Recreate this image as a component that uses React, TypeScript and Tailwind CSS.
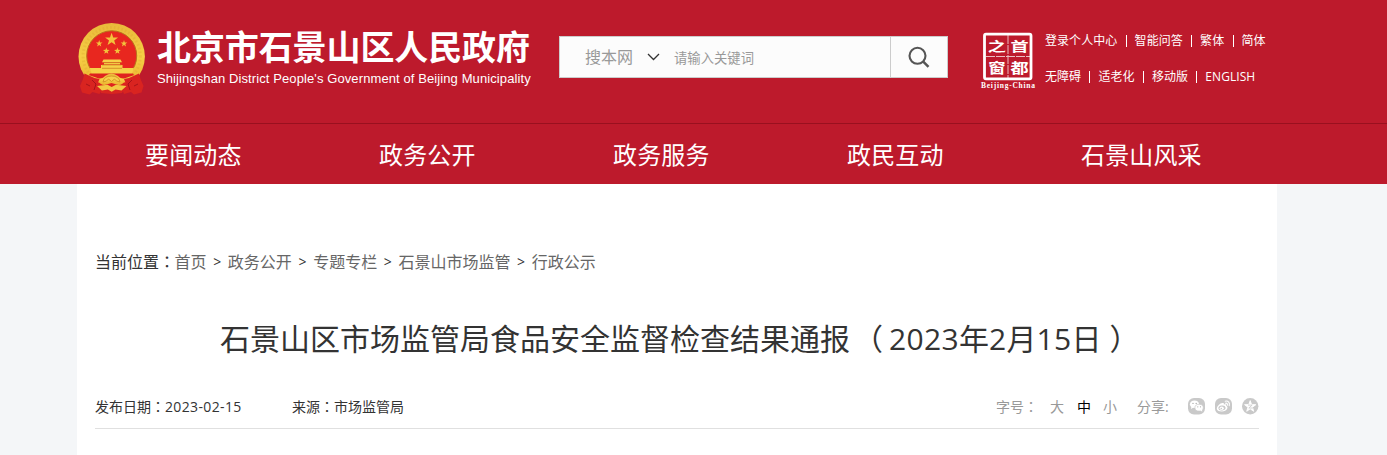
import React from "react";

const navItems = ["要闻动态", "政务公开", "政务服务", "政民互动", "石景山风采"];
const crumbs = ["首页", "政务公开", "专题专栏", "石景山市场监管", "行政公示"];

function star(cx: number, cy: number, r: number) {
  return Array.from({ length: 10 }, (_, i) => {
    const a = (Math.PI / 5) * i - Math.PI / 2;
    const q = i % 2 ? r * 0.4 : r;
    return `${(cx + q * Math.cos(a)).toFixed(2)},${(cy + q * Math.sin(a)).toFixed(2)}`;
  }).join(" ");
}

function Emblem() {
  return (
    <svg className="h-[72px] w-[68px] shrink-0" viewBox="0 0 68 72">
      <defs>
        <linearGradient id="gold" x1="0" y1="0" x2="0" y2="1">
          <stop offset="0" stopColor="#e9b93a" />
          <stop offset="0.5" stopColor="#f6cf45" />
          <stop offset="1" stopColor="#e8ae2c" />
        </linearGradient>
      </defs>
      <ellipse cx="33.7" cy="33.5" rx="33.2" ry="33.5" fill="url(#gold)" />
      <circle cx="33.7" cy="33" r="28.6" fill="none" stroke="#dca22b" strokeWidth="3" strokeDasharray="1.6 2.2" opacity="0.3" />
      <circle cx="33.7" cy="32.8" r="25" fill="#e8271f" stroke="#b9731c" strokeWidth="1" />
      <g fill="#f3c33c">
        <polygon points={star(33.6, 16.6, 6.8)} />
        <polygon points={star(21.2, 20.6, 3.5)} />
        <polygon points={star(46, 20.6, 3.5)} />
        <polygon points={star(28.3, 28, 3.5)} />
        <polygon points={star(39.4, 28, 3.5)} />
      </g>
      <path d="M25.5 36.5h17l1.5 2.8H24zM26 39.8h16v1.8H26zM23 42h21.5v3.5H23zM11.5 45h44.4l-2 6h-40z" fill="#f6d148" />
      <path d="M25 39.6h18M24 41.9h19.5M24 45.3h20" stroke="#cc741c" strokeWidth="0.7" />
      <path d="M12 50.5h43l5 8-12 8H19L7 58z" fill="#e0221e" />
      <path d="M9 51.5l9 3c3 1.5 6 1.5 9-1.5q6.5-5 13 0c3 3 6 3 9 1.5l9-3-2 6.5-10 1.5-4 3-8.5-2.5-8.5 2.5-4-3-10-1.5z" fill="url(#gold)" />
      <path d="M25 59q1-6 8.5-6t8.5 6l-3.5-1-2-2-3 2.5-3-2.5-2 2z" fill="#f6d04a" stroke="#cf881f" strokeWidth="0.8" />
      <path d="M6.5 50.5l10 4.5 5 1-2 5 4 5-2 5-7-2-3 2.5-7.5-2-2-6.5 3-7z" fill="#d92420" />
      <path d="M61 50.5l-10 4.5-5 1 2 5-4 5 2 5 7-2 3 2.5 7.5-2 2-6.5-3-7z" fill="#d92420" />
      <path d="M19 61l14.7 2L48.5 61 44 70l-10.3 1L23 70z" fill="#d92420" />
      <path d="M19 63l10.500-1.300 4.200 2.300 4.200-2.300L48.500 63l-5 4.500-6-1-3.800 2.200-3.800-2.200-6 1z" fill="#f2c943" />
      <path d="M14 57l4 4-2 6M8 61l4 2M54 57l-4 4 2 6M60 61l-4 2" stroke="#a71319" fill="none" />
    </svg>
  );
}

function CapitalSeal() {
  return (
    <svg className="h-[59px] w-[56px] shrink-0" viewBox="0 0 56 59">
      <rect x="4.5" y="3.2" width="46.5" height="44.6" rx="1.5" fill="none" stroke="#fff" strokeWidth="2.8" />
      <path d="M28 4v43M6 25.5h44" stroke="#fff" strokeWidth="1" strokeDasharray="9 1" opacity="0.7" />
      <g fill="#fff" className="font-['Noto_Sans_CJK_SC',sans-serif] font-bold" fontSize="16.5" textAnchor="middle">
        <text transform="translate(16.800 20.300) scale(1.1 .78)">之</text>
        <text transform="translate(39.500 20.300) scale(1.1 .78)">首</text>
        <text transform="translate(17 42) scale(1.050 .82)">窗</text>
        <text transform="translate(39.500 42) scale(1.1 .82)">都</text>
      </g>
      <text x="1" y="56.5" textLength="54" lengthAdjust="spacing" fontSize="7.5" fill="#fff" className="font-['Liberation_Serif',serif] font-bold">Beijing-China</text>
    </svg>
  );
}

function Colon() {
  return <span className="font-['Noto_Sans_CJK_TC',sans-serif] leading-none">：</span>;
}

function Links({ items }: { items: string[] }) {
  return (
    <div className="flex h-4 items-center text-[12px] leading-4 whitespace-nowrap text-white">
      {items.map((t, i) => (
        <React.Fragment key={t}>
          {i > 0 && <span className="mr-[8px] ml-[8.3px] h-[12px] w-px bg-white" />}
          <a className="tracking-[0.05px]">{t}</a>
        </React.Fragment>
      ))}
    </div>
  );
}

function WechatIcon() {
  return (
    <svg className="size-[17px]" viewBox="0 0 17 17">
      <rect width="17" height="16.5" rx="6" fill="#c9c9c9" />
      <ellipse cx="6.5" cy="6.3" rx="4.6" ry="3.8" fill="#fff" />
      <path d="M3.5 8.5l-.6 2.5 2.7-1.4z" fill="#fff" />
      <ellipse cx="11.1" cy="9.7" rx="4.2" ry="3.4" fill="#fff" stroke="#c9c9c9" strokeWidth="0.7" />
      <path d="M12.5 12.3l1.7 1.4-.3-2.4z" fill="#fff" />
      <g fill="#aaa">
        <circle cx="5" cy="5.4" r=".7" /><circle cx="8.2" cy="5.4" r=".7" />
        <circle cx="9.8" cy="8.8" r=".6" /><circle cx="12.5" cy="8.8" r=".6" />
      </g>
    </svg>
  );
}

function WeiboIcon() {
  return (
    <svg className="size-[17px]" viewBox="0 0 17 17">
      <rect width="17" height="16.5" rx="6" fill="#c9c9c9" />
      <path d="M7.4 5.1c1-.4 1.8 0 1.4 1.3 1.9-.7 2.9 0 2.2 1.4 3.2 1.2 1 5.6-4.2 5.6-5.5 0-6.2-3.3-3.3-6.2 1.4-1.4 2.7-2 3.9-2.1z" fill="#fff" />
      <ellipse cx="7" cy="10" rx="3.6" ry="2.5" fill="#c9c9c9" transform="rotate(-8 7 10)" />
      <ellipse cx="6.7" cy="10.3" rx="2.1" ry="1.7" fill="#fff" />
      <circle cx="6.3" cy="10.5" r=".8" fill="#c9c9c9" />
      <path d="M10.2 3.2c3-.7 5 1.7 4 4.5M10.5 5.2c1.5-.3 2.3.7 1.8 2" fill="none" stroke="#fff" strokeWidth="1.1" strokeLinecap="round" />
    </svg>
  );
}

function QzoneIcon() {
  return (
    <svg className="size-[17px]" viewBox="0 0 17 17">
      <circle cx="8.2" cy="8.2" r="8.2" fill="#c9c9c9" />
      <polygon points={star(8.2, 8.5, 5.9)} fill="#fff" stroke="#fff" strokeWidth="0.9" strokeLinejoin="round" />
      <path d="M6 7.1h4.2L6.8 10h4" fill="none" stroke="#c9c9c9" strokeWidth="0.8" />
    </svg>
  );
}

export default function App() {
  return (
    <div className="h-[455px] overflow-hidden bg-[#f4f6f8] font-['Open_Sans','Noto_Sans_CJK_SC',sans-serif] text-[#333]">
      <header className="bg-[#bd1a2c]">
        <div className="flex h-[123px] items-start pl-[78px]">
          <div className="pt-[23px]"><Emblem /></div>
          <div className="ml-[11px] w-[376px] pt-[26px] whitespace-nowrap text-white">
            <div className="font-['Noto_Sans_CJK_SC',sans-serif] text-[34px] leading-[40px] font-bold tracking-[-0.1px]">北京市石景山区人民政府</div>
            <div className="mt-[5px] font-['Liberation_Sans',sans-serif] text-[13px] leading-[16px] tracking-[0.1px]">Shijingshan District People's Government of Beijing Municipality</div>
          </div>
          <div className="mt-[36px] ml-[26px] flex h-[42px] w-[389px] shrink-0 border border-[#ccc] bg-[#fcfcfc]">
            <div className="flex flex-1 items-center pl-[25px]">
              <span className="text-[16px] leading-5 text-[#999]">搜本网</span>
              <svg className="ml-[14px] h-[8px] w-[13px]" viewBox="0 0 13 8"><path d="M1 1l5.5 5.5L12 1" fill="none" stroke="#333" strokeWidth="1.3" /></svg>
              <span className="mt-px ml-[14px] text-[13.33px] leading-5 text-[#999]">请输入关键词</span>
            </div>
            <div className="flex w-[57px] items-center justify-center border-l border-[#ccc]">
              <svg className="h-[22px] w-[22px]" viewBox="0 0 22 22"><circle cx="9.5" cy="9.8" r="8" fill="none" stroke="#555" strokeWidth="2.1" /><path d="M15 15.3l5.5 5.5" stroke="#555" strokeWidth="2.4" /></svg>
            </div>
          </div>
          <div className="mt-[31px] ml-[32px]"><CapitalSeal /></div>
          <div className="mt-[33px] ml-[9px] flex flex-col gap-5">
            <Links items={["登录个人中心", "智能问答", "繁体", "简体"]} />
            <Links items={["无障碍", "适老化", "移动版", "ENGLISH"]} />
          </div>
        </div>
        <nav className="flex h-[61px] border-t border-[#99101f] pl-[145px] text-[24px] leading-[62px] tracking-[0.15px] whitespace-nowrap text-white">
          {navItems.map((t) => <a key={t} className="w-[234px] shrink-0">{t}</a>)}
        </nav>
      </header>
      <main className="ml-[77px] h-[271px] w-[1200px] bg-white px-[18px] pt-[66px]">
        <div className="flex h-6 items-center text-[16px] leading-6 whitespace-nowrap">
          <span className="w-[79.5px]">当前位置<Colon /></span>
          {crumbs.map((t, i) => (
            <React.Fragment key={t}>
              {i > 0 && <span className="w-[21.3px] text-center text-[14px]">&gt;</span>}
              <a className="text-[#666]">{t}</a>
            </React.Fragment>
          ))}
        </div>
        <h1 className="mt-[45px] flex h-10 items-center pl-[125px] text-[30px] leading-10 whitespace-nowrap">
          <span>石景山区市场监管局食品安全监督检查结果通报</span>
          <span className="ml-[3px] w-[36px]">（</span>
          <span className="w-[70px] tracking-[0.34px]">2023</span>
          <span>年</span>
          <span className="w-[17.5px]">2</span>
          <span>月</span>
          <span className="w-[35px] tracking-[0.34px]">15</span>
          <span>日</span>
          <span className="ml-[8px]">）</span>
        </h1>
        <div className="mt-[28px] flex h-[42px] w-[1164px] items-center border-b border-[#e0e0e0] pb-px text-[14px] leading-5 whitespace-nowrap">
          <span>发布日期<Colon /></span>
          <span className="w-[77px] tracking-[0.37px]">2023-02-15</span>
          <span className="ml-[50px]">来源<Colon />市场监管局</span>
          <div className="ml-auto flex items-center text-[#999]">
            <span className="w-[54px]">字号<Colon /></span>
            <span className="w-[27px]">大</span>
            <span className="w-[26px] text-black">中</span>
            <span className="w-[34px]">小</span>
            <span className="w-[51px]">分享:</span>
            <div className="mb-[2px] flex gap-[10px]"><WechatIcon /><WeiboIcon /><QzoneIcon /></div>
          </div>
        </div>
      </main>
    </div>
  );
}
